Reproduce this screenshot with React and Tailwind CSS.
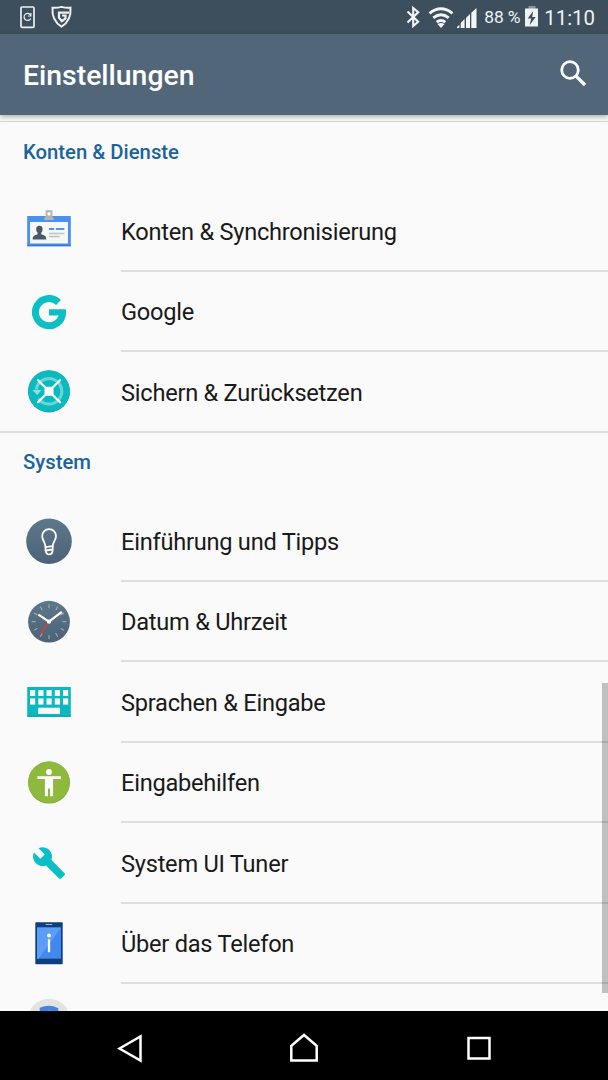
const Svg = ({ children }) => (
  <svg viewBox="0 0 48 48" className="h-12 w-12 overflow-visible">{children}</svg>
);

const AccountIcon = () => (
  <Svg>
    <rect x="2.2" y="9" width="43.6" height="30.2" fill="#4a90ee" />
    <path d="M2.2 39.2h43.6v-1.4H2.2z" fill="#3978d8" />
    <rect x="5" y="15" width="38" height="21.5" fill="#f6f6f6" />
    <path d="M20.6 3.3h6.8v7h1.2v2.8h-9.3v-2.8h1.3z" fill="#b4b4b4" />
    <rect x="22.5" y="5.2" width="3" height="3.2" rx="1" fill="#fff" />
    <path d="M7.700 32.400c0-3.300 1.500-4 4.900-5.100v-1.500c-1-1-1.400-2.300-1.400-3.700 0-2.300 1.200-3.300 3.200-3.300s3.200 1 3.200 3.300c0 1.400-.4 2.700-1.400 3.700v1.500c3.400 1.100 5.100 1.800 5.100 5.100z" fill="#455a69" />
    <path d="M24 22h5.300M31 22h8.300" stroke="#4f94ee" strokeWidth="2" />
    <path d="M24 26.500h15.300M24 29.500h10.800" stroke="#c2c2c2" strokeWidth="1.400" />
  </Svg>
);

const GoogleIcon = () => (
  <Svg>
    <g transform="translate(0 -.5)">
      <path d="M33.500 14.900A13.600 13.600 0 1 0 37.600 25.500" fill="none" stroke="#0cbfc5" strokeWidth="7" />
      <path d="M24 21.800h16.800q.5 3-.1 6.300H24z" fill="#0cbfc5" />
    </g>
  </Svg>
);

const BackupIcon = () => (
  <Svg>
    <circle cx="24" cy="23.500" r="20.900" fill="#079da3" />
    <circle cx="24" cy="23" r="20.800" fill="#0bbabf" />
    <g transform="translate(0 -.4)">
      <path d="M11.300 22A12.800 12.800 0 1 1 13.500 31" fill="none" stroke="#fff" strokeOpacity=".4" strokeWidth="3" />
      <path d="M7.500 22.500h9l-4.300 5z" fill="#fff" fillOpacity=".55" />
      <path d="M13 12.600l22 22M35 12.600l-22 22" stroke="#fff" strokeWidth="2.200" strokeLinecap="round" />
      <path d="M21.500 19.100h5l2 2v5l-2 2h-5l-2-2v-5z" fill="#fff" />
    </g>
  </Svg>
);

const BulbIcon = () => (
  <Svg>
    <defs>
      <linearGradient id="slate" x1="0" y1="0" x2="0" y2="1">
        <stop offset="0" stopColor="#5d778b" />
        <stop offset="1" stopColor="#4c6377" />
      </linearGradient>
    </defs>
    <circle cx="24" cy="24.200" r="22.800" fill="url(#slate)" />
    <g fill="none" stroke="#fff" strokeWidth="1.800" strokeLinejoin="round" strokeLinecap="round">
      <path d="M20.500 30.200c0-5-3.300-6.500-3.300-11.200a6.900 6.900 0 0 1 13.800 0c0 4.700-3.300 6-3.300 10.200z" />
      <path d="M20.500 30.200v3.300l7.300-1M27.700 29.200v3.600c0 3-1.500 4.600-3.700 4.600-1.800 0-3-1-3.300-3.900" />
    </g>
  </Svg>
);

const ClockIcon = () => (
  <Svg>
    <circle cx="24" cy="23.700" r="20.900" fill="url(#slate)" />
    <g stroke="#a9b4be" strokeWidth="1" transform="translate(0 -.3)">
      {[0, 30, 60, 90, 120, 150, 180, 210, 240, 270, 300, 330].map((a) => (
        <path key={a} d="M24 6.600v4" transform={`rotate(${a} 24 24)`} />
      ))}
    </g>
    <path d="M24 23.700L15 36.700" stroke="#e0383c" strokeWidth="1.500" />
    <path d="M13.400 16.700L24 23.700L36.800 13.900" fill="none" stroke="#fff" strokeWidth="2.200" />
    <circle cx="24" cy="23.700" r="2.100" fill="#fff" />
  </Svg>
);

const KeyboardIcon = () => (
  <Svg>
    <rect x="2.200" y="9" width="43.600" height="29.700" fill="#0ab8bd" />
    <path d="M2.200 37.700h43.600v1H2.200z" fill="#069ba0" />
    {[5, 13.300, 21.500, 29.800, 38].map((x) => (
      <g key={x} fill="#fafafa">
        <rect x={x} y="12" width="5.200" height="6" />
        <rect x={x} y="20.400" width="5.200" height="6.200" />
      </g>
    ))}
    <rect x="13.200" y="29.700" width="21.800" height="6.200" fill="#fafafa" />
  </Svg>
);

const AccessibilityIcon = () => (
  <Svg>
    <circle cx="24" cy="23.600" r="20.900" fill="#7aa032" />
    <circle cx="24" cy="23.100" r="20.800" fill="#8dba3c" />
    <circle cx="24" cy="13" r="2.900" fill="#fff" />
    <path d="M12.400 17.200h23.400v2.700h-7.700v17.300h-3V29.500h-2.200v7.700h-3V19.900h-7.500z" fill="#fff" />
  </Svg>
);

const WrenchIcon = () => (
  <Svg>
    <path transform="translate(6.700 6.700) scale(1.450)" fill="#0cbfc5" d="M22.700 19l-9.100-9.100c.9-2.300.4-5-1.500-6.900-2-2-5-2.400-7.400-1.300L9 6 6 9 1.600 4.700C.4 7.100.9 10.100 2.900 12.100c1.900 1.900 4.600 2.400 6.900 1.500l9.100 9.100c.4.4 1 .4 1.400 0l2.300-2.300c.5-.4.5-1.100.1-1.400z" />
  </Svg>
);

const PhoneIcon = () => (
  <Svg>
    <g transform="translate(0 -.7)">
      <rect x="10.300" y="2.900" width="27.400" height="42" rx=".7" fill="#0d3f80" />
      <rect x="12" y="8.200" width="24" height="31.200" fill="#4388ee" />
      <path d="M12 8.200h24L13.500 39.400H12z" fill="#5b9df7" />
      <path d="M20.700 5.200h6.600" stroke="#a8b7ca" strokeWidth="1" />
      <circle cx="24" cy="16.200" r="1.900" fill="#fff" />
      <path d="M24 20v12.900" stroke="#fff" strokeWidth="2.300" />
    </g>
  </Svg>
);

const HelpIcon = () => (
  <Svg>
    <circle cx="24" cy="19.700" r="21" fill="#e2e4e3" />
    <path d="M14.700 7.800Q24 3.500 33.300 8.200V16H14.700z" fill="#4683dc" />
    <path d="M21 11.500q3-2 6 0z" fill="#a9c4ec" />
  </Svg>
);

const Row = ({ icon: Icon, label }) => (
  <div className="flex h-[80.5px] shrink-0 items-center">
    <div className="flex w-[121px] shrink-0 pl-[25px]"><Icon /></div>
    <div className="flex h-full flex-1 items-center border-b-2 border-[#dedede] pt-1 text-[23.6px] tracking-[-0.24px] text-[#191919]">{label}</div>
  </div>
);

const Heading = ({ children }) => (
  <h2 className="h-[68.5px] shrink-0 pl-[23px] pt-[14px] text-[20.3px] leading-[30px] font-medium text-[#1b639d]">{children}</h2>
);

export default function App() {
  return (
    <div className="flex h-[1080px] w-[608px] flex-col overflow-hidden bg-[#fafafa] font-[Roboto,sans-serif]">
      <div className="flex h-[34px] shrink-0 items-center bg-[#3d4e5c] text-[#f0f2f3]">
        <svg viewBox="0 0 60 34" className="ml-5 h-[34px] w-[60px]" fill="none" stroke="#eef0f1">
          <rect x="1" y="7" width="13" height="20.300" rx="1" strokeWidth="1.700" />
          <path d="M10.500 15a3.500 3.500 0 1 0 .2 3.500M10.900 13v3h-3" strokeWidth="1.200" />
          <path d="M41.500 6.900q5 1.300 9 .8 1 13-9 19-10-6-9-19 4 .5 9-.8z" strokeWidth="2" />
          <path d="M49 12.700H39v5l2.800 3.500 3.700-2.700v-3h-3.500" strokeWidth="2.200" />
        </svg>
        <svg viewBox="0 0 72 34" className="ml-auto h-[34px] w-[72px]" fill="#f4f5f5">
          <path d="M2.500 11.500l10.700 10.300L8.200 26V8l5 4.300L2.500 22.500" fill="none" stroke="#f4f5f5" strokeWidth="2.100" />
          <g fill="none" stroke="#f4f5f5" strokeWidth="2.900">
            <path d="M24.500 13.300q11.500-9 23 0M28.300 17.800q7.700-6.200 15.400 0M31.700 22.200q4.300-3.500 8.600 0" />
          </g>
          <path d="M36 28l-3.500-3.900q3.500-2 7 0z" />
          <path d="M52 28v-1l2.300-2.300V28zM55.700 28v-5l3.900-3.900V28zM61 28V18l4-4V28zM66.300 28V12.800L71.500 8v20z" />
        </svg>
        <span className="ml-[7px] w-[36px] whitespace-nowrap pt-px text-[17.400px] tracking-[-0.1px]">88 %</span>
        <svg viewBox="0 0 14 34" className="ml-[5px] h-[34px] w-[14px]">
          <path d="M3.500 6h7v3h-7z" fill="#89949c" />
          <path d="M0 8.500h13V26.500H0z" fill="#f0f1f1" />
          <path d="M8.200 11L2.700 18.500h3.500L4.700 25l6-8H7.200z" fill="#3d4e5c" />
        </svg>
        <span className="mr-[13px] ml-[5px] pt-0.5 text-[20.400px]">11:10</span>
      </div>
      <header className="z-10 flex h-[81px] shrink-0 items-center justify-between bg-[#516779] pt-0.5 pr-5 pl-[23px] shadow-[0_2px_5px_rgba(0,0,0,0.3)]">
        <h1 className="pt-0.5 text-[28.400px] font-medium text-white">Einstellungen</h1>
        <svg viewBox="0 0 28 28" className="mb-1 h-7 w-7" fill="none" stroke="#fff" strokeWidth="2.800">
          <circle cx="10" cy="10" r="8.300" />
          <path d="M15.800 15.800l9.200 9.200" strokeWidth="3.300" />
        </svg>
      </header>
      <main className="relative flex min-h-0 flex-1 flex-col overflow-hidden bg-[#fafafa]">
        <div className="mb-[0.5px] h-[7px] shrink-0 border-b border-[#d8d6d6]" />
        <Heading>Konten &amp; Dienste</Heading>
        <Row icon={AccountIcon} label="Konten & Synchronisierung" />
        <Row icon={GoogleIcon} label="Google" />
        <div className="shrink-0 bg-[linear-gradient(#dedede,#dedede)] bg-[length:100%_2px] bg-bottom bg-no-repeat">
          <Row icon={BackupIcon} label="Sichern & Zurücksetzen" />
        </div>
        <Heading>System</Heading>
        <Row icon={BulbIcon} label="Einführung und Tipps" />
        <Row icon={ClockIcon} label="Datum & Uhrzeit" />
        <Row icon={KeyboardIcon} label="Sprachen & Eingabe" />
        <Row icon={AccessibilityIcon} label="Eingabehilfen" />
        <Row icon={WrenchIcon} label="System UI Tuner" />
        <Row icon={PhoneIcon} label="Über das Telefon" />
        <Row icon={HelpIcon} label="" />
        <div className="absolute top-[568px] right-0 h-[310px] w-1.5 bg-black/23" />
      </main>
      <nav className="flex h-[69px] shrink-0 items-center justify-between bg-black pr-[115px] pl-[115px] pt-[5px]">
        <svg viewBox="0 0 28 32" className="h-8 w-7" fill="none" stroke="#fff" strokeWidth="2.500">
          <path d="M4.500 16.500l21-12v24z" />
        </svg>
        <svg viewBox="0 0 32 32" className="h-8 w-8" fill="none" stroke="#fff" strokeWidth="2.500">
          <path d="M3.300 28.500V13.800L16 3l12.700 10.800V28.500z" />
        </svg>
        <svg viewBox="0 0 28 32" className="h-8 w-7" fill="none" stroke="#fff" strokeWidth="2.500">
          <path d="M3.500 6h21v20.500h-21z" />
        </svg>
      </nav>
    </div>
  );
}
